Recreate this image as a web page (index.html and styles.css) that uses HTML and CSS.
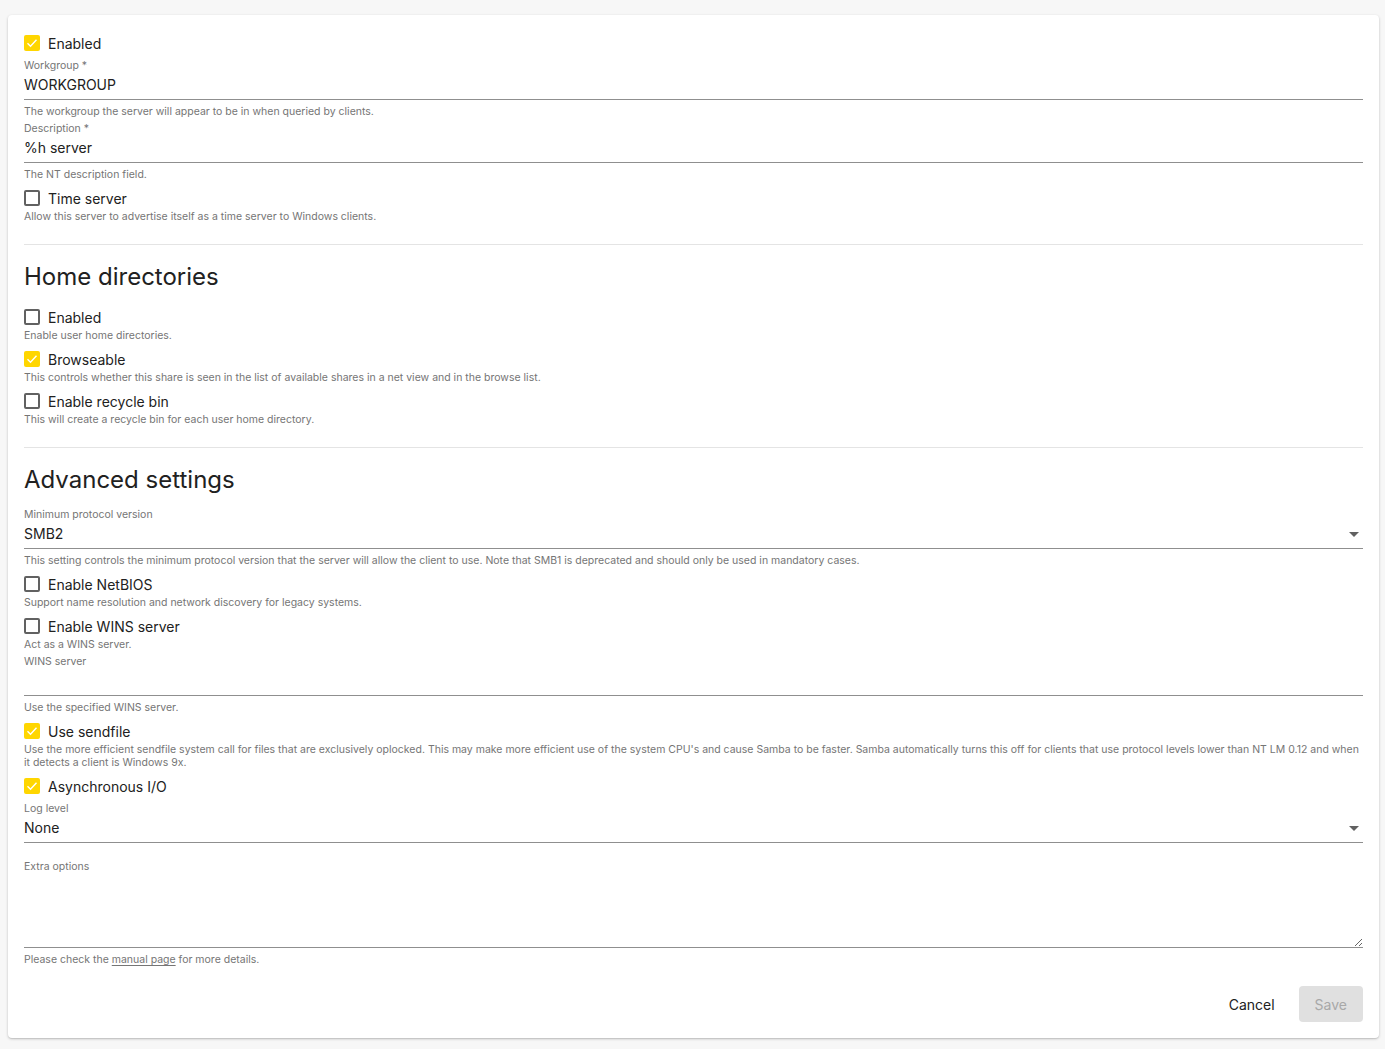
FILE: index.html
```html
<!DOCTYPE html>
<html lang="en">
<head>
<meta charset="utf-8">
<title>SMB settings</title>
<link rel="stylesheet" href="styles.css">
</head>
<body>
<div class="card">
  <div class="form">
    <label class="cb first"><span class="box checked"><svg viewBox="0 0 16 16"><path d="M3.5 8.2l3 3 6-6.4"/></svg></span><span class="cb-text">Enabled</span></label>

    <div class="field">
      <div class="label">Workgroup *</div>
      <div class="input">WORKGROUP</div>
      <div class="help after-input">The workgroup the server will appear to be in when queried by clients.</div>
    </div>

    <div class="field">
      <div class="label">Description *</div>
      <div class="input">%h server</div>
      <div class="help after-input">The NT description field.</div>
    </div>

    <label class="cb"><span class="box"></span><span class="cb-text">Time server</span></label>
    <div class="help">Allow this server to advertise itself as a time server to Windows clients.</div>

    <hr class="divider">
    <h2 class="heading">Home directories</h2>

    <label class="cb first"><span class="box"></span><span class="cb-text">Enabled</span></label>
    <div class="help">Enable user home directories.</div>

    <label class="cb"><span class="box checked"><svg viewBox="0 0 16 16"><path d="M3.5 8.2l3 3 6-6.4"/></svg></span><span class="cb-text">Browseable</span></label>
    <div class="help">This controls whether this share is seen in the list of available shares in a net view and in the browse list.</div>

    <label class="cb"><span class="box"></span><span class="cb-text">Enable recycle bin</span></label>
    <div class="help">This will create a recycle bin for each user home directory.</div>

    <hr class="divider">
    <h2 class="heading">Advanced settings</h2>

    <div class="field first">
      <div class="label">Minimum protocol version</div>
      <div class="input select">SMB2<span class="caret"></span></div>
      <div class="help after-input">This setting controls the minimum protocol version that the server will allow the client to use. Note that SMB1 is deprecated and should only be used in mandatory cases.</div>
    </div>

    <label class="cb"><span class="box"></span><span class="cb-text">Enable NetBIOS</span></label>
    <div class="help">Support name resolution and network discovery for legacy systems.</div>

    <label class="cb"><span class="box"></span><span class="cb-text">Enable WINS server</span></label>
    <div class="help">Act as a WINS server.</div>

    <div class="field">
      <div class="label">WINS server</div>
      <div class="input"></div>
      <div class="help after-input">Use the specified WINS server.</div>
    </div>

    <label class="cb"><span class="box checked"><svg viewBox="0 0 16 16"><path d="M3.5 8.2l3 3 6-6.4"/></svg></span><span class="cb-text">Use sendfile</span></label>
    <div class="help">Use the more efficient sendfile system call for files that are exclusively oplocked. This may make more efficient use of the system CPU's and cause Samba to be faster. Samba automatically turns this off for clients that use protocol levels lower than NT LM 0.12 and when it detects a client is Windows 9x.</div>

    <label class="cb"><span class="box checked"><svg viewBox="0 0 16 16"><path d="M3.5 8.2l3 3 6-6.4"/></svg></span><span class="cb-text">Asynchronous I/O</span></label>

    <div class="field">
      <div class="label">Log level</div>
      <div class="input select">None<span class="caret"></span></div>
    </div>

    <div class="field extra">
      <div class="label">Extra options</div>
      <textarea class="textarea"></textarea>
      <div class="help after-input">Please check the <a class="link" href="#">manual page</a> for more details.</div>
    </div>

    <div class="actions">
      <button class="btn cancel" type="button">Cancel</button>
      <button class="btn save" type="button" disabled>Save</button>
    </div>
  </div>
</div>
</body>
</html>
```

FILE: styles.css
```css
html, body {
  margin: 0;
  padding: 0;
  background: #f7f7f7;
}

body {
  font-family: Inter, "Noto Sans", "Liberation Sans", sans-serif;
  color: #212121;
  padding: 15px 6px 11px 8px;
}

.card {
  background: #ffffff;
  border-radius: 4px;
  box-shadow: 0 1px 3px rgba(0, 0, 0, 0.2), 0 1px 1px rgba(0, 0, 0, 0.08);
  padding: 16px;
}

.form {
  display: flex;
  flex-direction: column;
}

.cb {
  display: flex;
  align-items: center;
  height: 24px;
  margin-top: 5px;
  cursor: pointer;
}

.cb.first {
  margin-top: 0;
}

.box {
  width: 16px;
  height: 16px;
  box-sizing: border-box;
  border: 2px solid #616161;
  border-radius: 2px;
  margin-right: 8px;
  flex: none;
  display: flex;
  align-items: center;
  justify-content: center;
}

.box.checked {
  border: none;
  background: #ffd600;
}

.box svg {
  width: 16px;
  height: 16px;
  fill: none;
  stroke: #ffffff;
  stroke-width: 1.4;
}

.cb-text {
  font-size: 14px;
  line-height: 24px;
  padding-top: 1px;
  color: #212121;
}

.field {
  margin-top: 4px;
  display: flex;
  flex-direction: column;
}

.field.first {
  margin-top: 0;
}

.field.extra {
  margin-top: 17px;
}

.label {
  font-size: 10.5px;
  line-height: 13px;
  color: #757575;
}

.input {
  height: 27px;
  line-height: 25px;
  font-size: 14px;
  color: #212121;
  border-bottom: 1px solid #8f8f8f;
  position: relative;
}

.select {
  padding-right: 24px;
}

.caret {
  position: absolute;
  right: 4px;
  top: 11px;
  width: 0;
  height: 0;
  border-left: 5px solid transparent;
  border-right: 5px solid transparent;
  border-top: 5px solid #616161;
}

.help {
  font-size: 10.5px;
  line-height: 13px;
  color: #757575;
}

.help.after-input {
  margin-top: 5px;
}

.link {
  color: #757575;
  text-decoration: underline;
  text-underline-offset: 2px;
}

.divider {
  border: none;
  border-top: 1px solid #e4e4e4;
  margin: 21px 0 0 0;
  height: 0;
}

.heading {
  font-size: 24px;
  font-weight: 400;
  line-height: 32px;
  margin: 16px 0 12px 0;
  color: #212121;
}

.textarea {
  display: block;
  height: 74px;
  box-sizing: content-box;
  margin: 0;
  padding: 0;
  border: none;
  border-bottom: 1px solid #8f8f8f;
  border-radius: 0;
  outline: none;
  font-family: inherit;
  font-size: 14px;
  color: #212121;
  background: transparent;
  resize: vertical;
}

.actions {
  display: flex;
  justify-content: flex-end;
  gap: 8px;
  margin-top: 20px;
}

.btn {
  height: 36px;
  padding: 0 16px;
  border: none;
  border-radius: 4px;
  font-family: inherit;
  font-size: 14px;
  background: transparent;
  cursor: pointer;
}

.cancel {
  color: #212121;
}

.save {
  background: #e0e0e0;
  color: #a8a8a8;
  min-width: 64px;
}
```
